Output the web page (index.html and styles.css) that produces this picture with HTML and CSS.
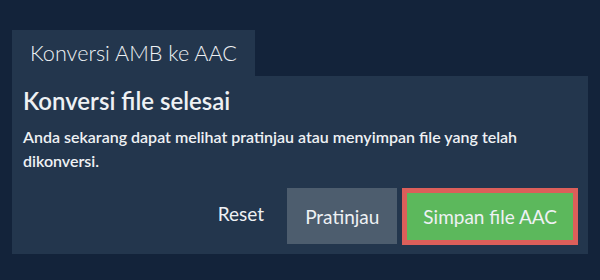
FILE: index.html
```html
<!DOCTYPE html>
<html lang="id">
<head>
<meta charset="utf-8">
<link rel="stylesheet" href="styles.css">
</head>
<body>
<div class="wrap">
  <div class="tab">Konversi AMB ke AAC</div>
  <div class="panel">
    <h2 class="title">Konversi file selesai</h2>
    <p class="desc">Anda sekarang dapat melihat pratinjau atau menyimpan file yang telah dikonversi.</p>
    <div class="actions">
      <button class="btn btn-link">Reset</button>
      <button class="btn btn-gray">Pratinjau</button>
      <button class="btn btn-green">Simpan file AAC</button>
    </div>
  </div>
</div>
</body>
</html>
```

FILE: styles.css
```css
* { box-sizing: border-box; }
html, body {
  margin: 0;
  padding: 0;
  background: #13233a;
  font-family: Lato, "Noto Sans", sans-serif;
  color: #eef1f4;
}
.wrap {
  padding: 30px 12px 0 12px;
}
.tab {
  display: inline-block;
  background: #23364d;
  height: 46px;
  padding: 0 18px;
  font-size: 21.6px;
  font-weight: 300;
  line-height: 46px;
}
.panel {
  background: #23364d;
  padding: 10px 10px 9px 11px;
}
.title {
  margin: 0;
  font-size: 24px;
  font-weight: 600;
  line-height: 30px;
}
.desc {
  margin: 9px 0 0 0;
  font-size: 16px;
  font-weight: 600;
  line-height: 24px;
}
.actions {
  display: flex;
  justify-content: flex-end;
  align-items: flex-start;
  gap: 5px;
  margin-top: 15px;
}
.btn {
  font-family: Lato, "Noto Sans", sans-serif;
  font-size: 19px;
  font-weight: 400;
  color: #eef1f4;
  border: none;
  height: 56px;
  padding: 0 18px;
  cursor: pointer;
}
.btn-link {
  background: transparent;
  padding: 0 18px 0 0;
  height: 50px;
}
.btn-gray {
  background: #4d5d6e;
}
.btn-green {
  background: #5cb85c;
  border: 5px solid #dc5f5a;
  padding: 0 16px;
  height: 57px;
}
```
